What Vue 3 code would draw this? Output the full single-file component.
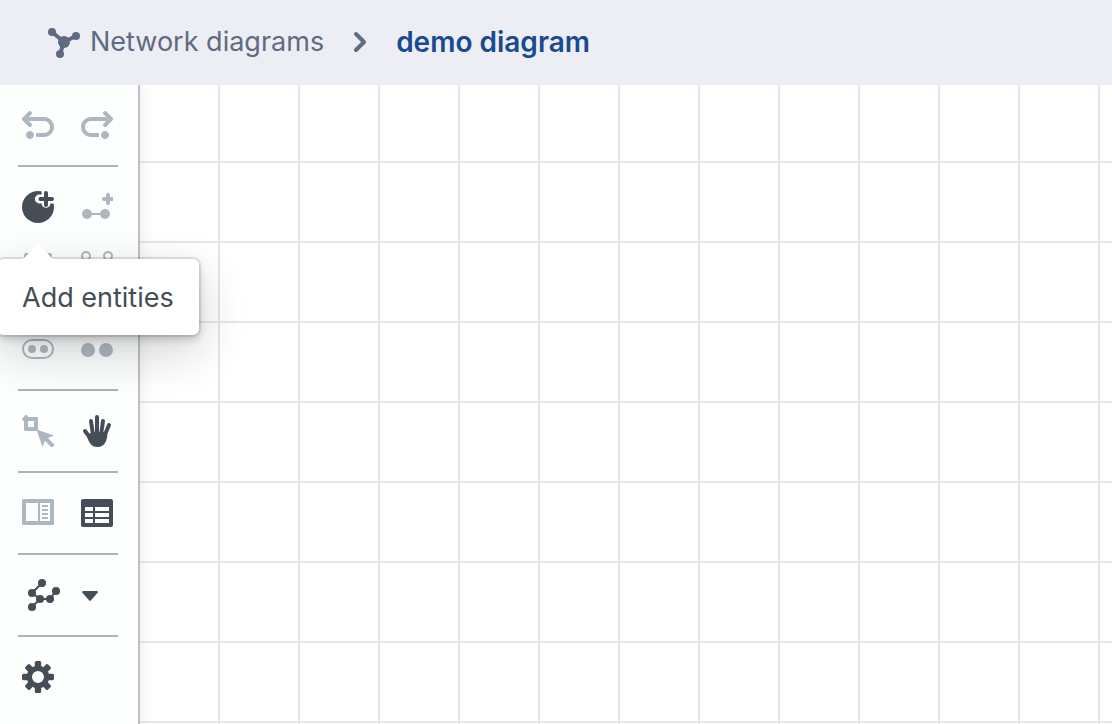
<script setup>
const history = [
  { label: 'Undo', icon: 'undo' },
  { label: 'Redo', icon: 'redo' },
]
const undoPath =
  'M4 11c-1.1 0-2 .9-2 2s.9 2 2 2 2-.9 2-2-.9-2-2-2zm7-7H3.41l1.29-1.29c.19-.18.3-.43.3-.71a1.003 1.003 0 00-1.71-.71l-3 3a1.014 1.014 0 000 1.42l3 3C3.47 8.89 3.72 9 4 9a1.003 1.003 0 00.71-1.71L3.41 6H11c1.66 0 3 1.34 3 3s-1.34 3-3 3H7v2h4c2.76 0 5-2.24 5-5s-2.24-5-5-5z'
const toothAngles = [0, 45, 90, 135, 180, 225, 270, 315]
</script>

<template>
  <div class="app">
    <header class="header">
      <nav class="crumbs" aria-label="Breadcrumb">
        <a class="crumb" href="#">
          <svg class="icon" viewBox="0 0 16 16" aria-hidden="true">
            <path d="M2 3l6 5 6-3M8 8l-2 6" class="line w2" />
            <circle cx="2" cy="3" r="2" /><circle cx="14" cy="5" r="2" />
            <circle cx="6" cy="14" r="2" /><circle cx="8" cy="8" r="3" />
          </svg>
          <span>Network diagrams</span>
        </a>
        <svg class="chevron" viewBox="0 0 16 16" aria-hidden="true">
          <path d="M6 4l4 4-4 4" class="line w2 round" />
        </svg>
        <a class="crumb current" href="#" aria-current="page">demo diagram</a>
      </nav>
    </header>

    <div class="body">
      <aside class="toolbar">
        <div class="group">
          <button v-for="b in history" :key="b.icon" class="tool muted" :aria-label="b.label">
            <svg class="icon" :class="{ flip: b.icon === 'redo' }" viewBox="0 0 16 16"><path :d="undoPath" /></svg>
          </button>
        </div>
        <div class="group">
          <div class="anchor">
            <button class="tool" aria-label="Add entities" aria-describedby="add-tip">
              <svg class="icon" viewBox="0 0 16 16">
                <mask id="plus-cut">
                  <rect width="16" height="16" fill="#fff" />
                  <path d="M8.600 4H16M12 0v6.200" fill="none" stroke="#000" stroke-width="4.400" stroke-linecap="round" />
                </mask>
                <circle cx="8" cy="8" r="8" mask="url(#plus-cut)" />
                <path d="M9.200 4H15M12 1v6" class="line w2 round" />
              </svg>
            </button>
            <div id="add-tip" class="tooltip" role="tooltip">
              <svg class="arrow" viewBox="0 0 36 18" aria-hidden="true">
                <path d="M0 16C4 16 5 14 7 12L16 2.600Q18 .6 20 2.600L29 12C31 14 32 16 36 16V18H0z" />
              </svg>
              Add entities
            </div>
          </div>
          <button class="tool muted" aria-label="Add link">
            <svg class="icon" viewBox="0 0 16 16">
              <path d="M3 11.500h9" class="line w1" />
              <circle cx="3" cy="11.500" r="2.500" /><circle cx="12" cy="11.500" r="2.500" />
              <path d="M11.500 4h4M13.500 2v4" class="line w2 round" />
            </svg>
          </button>
          <button class="tool muted" aria-label="Remove entities">
            <svg class="icon" viewBox="0 0 16 16">
              <rect x="1" y="1" width="4" height="4" rx="1" /><rect x="11" y="1" width="4" height="4" rx="1" />
              <rect x="1" y="10" width="4" height="4" rx="1" /><rect x="11" y="10" width="4" height="4" rx="1" />
            </svg>
          </button>
          <button class="tool muted" aria-label="Merge links">
            <svg class="icon" viewBox="0 0 16 16">
              <path d="M3.500 4.500l4 6M12.500 4.500l-4 6" class="line w1" />
              <circle cx="2.500" cy="2.500" r="2" class="line w1" /><circle cx="13.500" cy="2.500" r="2" class="line w1" />
              <circle cx="8" cy="12.500" r="2" class="line w1" />
            </svg>
          </button>
        </div>
        <div class="group">
          <button class="tool muted" aria-label="Group">
            <svg class="icon" viewBox="0 0 16 16">
              <rect x=".5" y="3.500" width="15" height="9" rx="4.500" class="line w1" />
              <circle cx="5" cy="8" r="2" /><circle cx="11" cy="8" r="2" />
            </svg>
          </button>
          <button class="tool muted" aria-label="Ungroup">
            <svg class="icon" viewBox="0 0 16 16">
              <circle cx="3.500" cy="8.500" r="3.500" /><circle cx="12.500" cy="8.500" r="3.500" />
            </svg>
          </button>
        </div>
        <div class="group">
          <button class="tool muted" aria-label="Select">
            <svg class="icon" viewBox="0 0 16 16">
              <path d="M1 1a1 1 0 012 0h4.300q.7 0 .7.700V7.300q0 .7-.7.700H1.700Q1 8 1 7.300V3a1 1 0 010-2zM3 3v3h3V3z" fill-rule="evenodd" />
              <path d="M7.300 7.300L16 10.200 12.900 11.500 15.700 14.200a1 1 0 01-1.500 1.500L11.500 12.900 10.200 16z" />
            </svg>
          </button>
          <button class="tool" aria-label="Pan">
            <svg class="icon" viewBox="0 0 16 16">
              <path d="M2 8l3 4M5 3l1 7M8 1v9M11 3l-1 7M14 5l-2.500 6" class="line w2 round" />
              <path d="M4 9.800L5.300 8.500h6.500L13.200 9.800C12.900 13.500 11.500 16 8.300 16 5 16 4 13.500 3 11z" />
            </svg>
          </button>
        </div>
        <div class="group">
          <button class="tool muted" aria-label="Details panel">
            <svg class="icon" viewBox="0 0 16 16">
              <path fill-rule="evenodd" d="M.8 1h14.400q.8 0 .8.800v11.400q0 .8-.8.800H.8q-.8 0-.8-.8V1.800Q0 1 .8 1zM2 3v9h6V3zM9 3v9h5V3z" />
              <path d="M10 4h3v1h-3zM10 6h3v1h-3zM10 8h3v1h-3zM10 10h3v1h-3z" />
            </svg>
          </button>
          <button class="tool" aria-label="Table">
            <svg class="icon" viewBox="0 0 16 16">
              <path fill-rule="evenodd" d="M1 1h14q1 0 1 1v12q0 1-1 1H1q-1 0-1-1V2q0-1 1-1zM2 5v2h4V5zM7 5v2h7V5zM2 8v2h4V8zM7 8v2h7V8zM2 11v2h4v-2zM7 11v2h7v-2z" />
            </svg>
          </button>
        </div>
        <div class="group layout">
          <button class="tool" aria-label="Layout">
            <svg class="icon" viewBox="0 0 16 16">
              <path d="M7 2L2 7l4 3-4 4M6 10h5l3-4" class="line w1" />
              <circle cx="7" cy="2" r="2" /><circle cx="2" cy="7" r="2" /><circle cx="14" cy="6" r="2" />
              <circle cx="6" cy="10" r="2" /><circle cx="11" cy="10" r="2" /><circle cx="2" cy="14" r="2" />
            </svg>
          </button>
          <button class="tool" aria-label="Layout options">
            <svg class="icon" viewBox="0 0 16 16">
              <path d="M4.500 6h7q.8.200.3.900L8.400 10.700q-.4.400-.8 0L4.200 6.900Q3.700 6.200 4.500 6z" />
            </svg>
          </button>
        </div>
        <div class="group">
          <button class="tool" aria-label="Settings">
            <svg class="icon" viewBox="0 0 16 16">
              <circle cx="8" cy="8" r="4.300" fill="none" stroke="currentColor" stroke-width="2.600" />
              <rect v-for="a in toothAngles" :key="a" x="6.400" y="0" width="3.200" height="3.600" rx=".8" :transform="`rotate(${a} 8 8)`" />
            </svg>
          </button>
        </div>
      </aside>
      <main class="canvas" aria-label="Diagram canvas"></main>
    </div>
  </div>
</template>

<style>
body { margin: 0; }
</style>

<style scoped>
.app {
  display: flex;
  flex-direction: column;
  height: 100vh;
  overflow: hidden;
  background: #fff;
  color: #454d56;
  font: 27px/36px Inter, "Noto Sans", sans-serif;
}
.header {
  display: flex;
  flex: none;
  align-items: center;
  box-sizing: border-box;
  height: 85px;
  padding: 0 48px 2px;
  background: #edeef3;
}
.crumbs {
  display: flex;
  align-items: center;
}
.crumb {
  display: flex;
  align-items: center;
  gap: 10px;
  color: #5f6b80;
  text-decoration: none;
  white-space: nowrap;
}
.crumb.current {
  color: #184a90;
  font-size: 28px;
  font-weight: 600;
}
.chevron {
  width: 32px;
  height: 32px;
  margin: 0 20px;
  color: #5f6b80;
}
.icon {
  display: block;
  flex: none;
  width: 32px;
  height: 32px;
  fill: currentColor;
}
.flip { transform: scaleX(-1); }
.line {
  fill: none;
  stroke: currentColor;
}
.w1 { stroke-width: 1; }
.w2 { stroke-width: 2; }
.round {
  stroke-linecap: round;
  stroke-linejoin: round;
}
.body {
  display: flex;
  flex: 1;
  min-height: 0;
  overflow: hidden;
}
.toolbar {
  position: relative;
  z-index: 1;
  flex: none;
  width: 138px;
  border-right: 2px solid #bfc0c5;
  background: #fdfefe;
  box-shadow: 2px 0 12px rgba(16, 22, 26, 0.07);
}
.group {
  display: grid;
  grid-template-columns: 58px 58px;
  column-gap: 1px;
  padding: 10px 0 10px 9px;
}
.group + .group::before {
  content: "";
  grid-column: 1 / -1;
  width: 100px;
  height: 2px;
  margin: -10px 0 10px 9px;
  background: #abb5bf;
}
.layout {
  grid-template-columns: 70px 22px;
  column-gap: 0;
}
.tool {
  display: flex;
  align-items: center;
  justify-content: center;
  width: 100%;
  height: 60px;
  padding: 0;
  border: 0;
  background: none;
  color: inherit;
  font: inherit;
}
.muted { color: #adb7c0; }
.anchor { position: relative; }
.tooltip {
  position: absolute;
  top: 82px;
  left: -11px;
  z-index: 2;
  padding: 21px 25px 19px 24px;
  border-radius: 6px;
  background: #fff;
  box-shadow: 0 0 0 2px rgba(16, 22, 26, 0.1), 0 4px 8px rgba(16, 22, 26, 0.2), 0 16px 48px rgba(16, 22, 26, 0.2);
  white-space: nowrap;
}
.arrow {
  position: absolute;
  top: -16px;
  left: 22px;
  width: 36px;
  height: 18px;
  fill: #fff;
}
.canvas {
  flex: 1;
  background-color: #fff;
  background-image:
    linear-gradient(90deg, transparent 78px, #e4e7ea 78px),
    linear-gradient(transparent 78px, #e5e6e8 78px);
  background-size: 80px 80px;
  background-position: 0 -2px;
}
</style>
